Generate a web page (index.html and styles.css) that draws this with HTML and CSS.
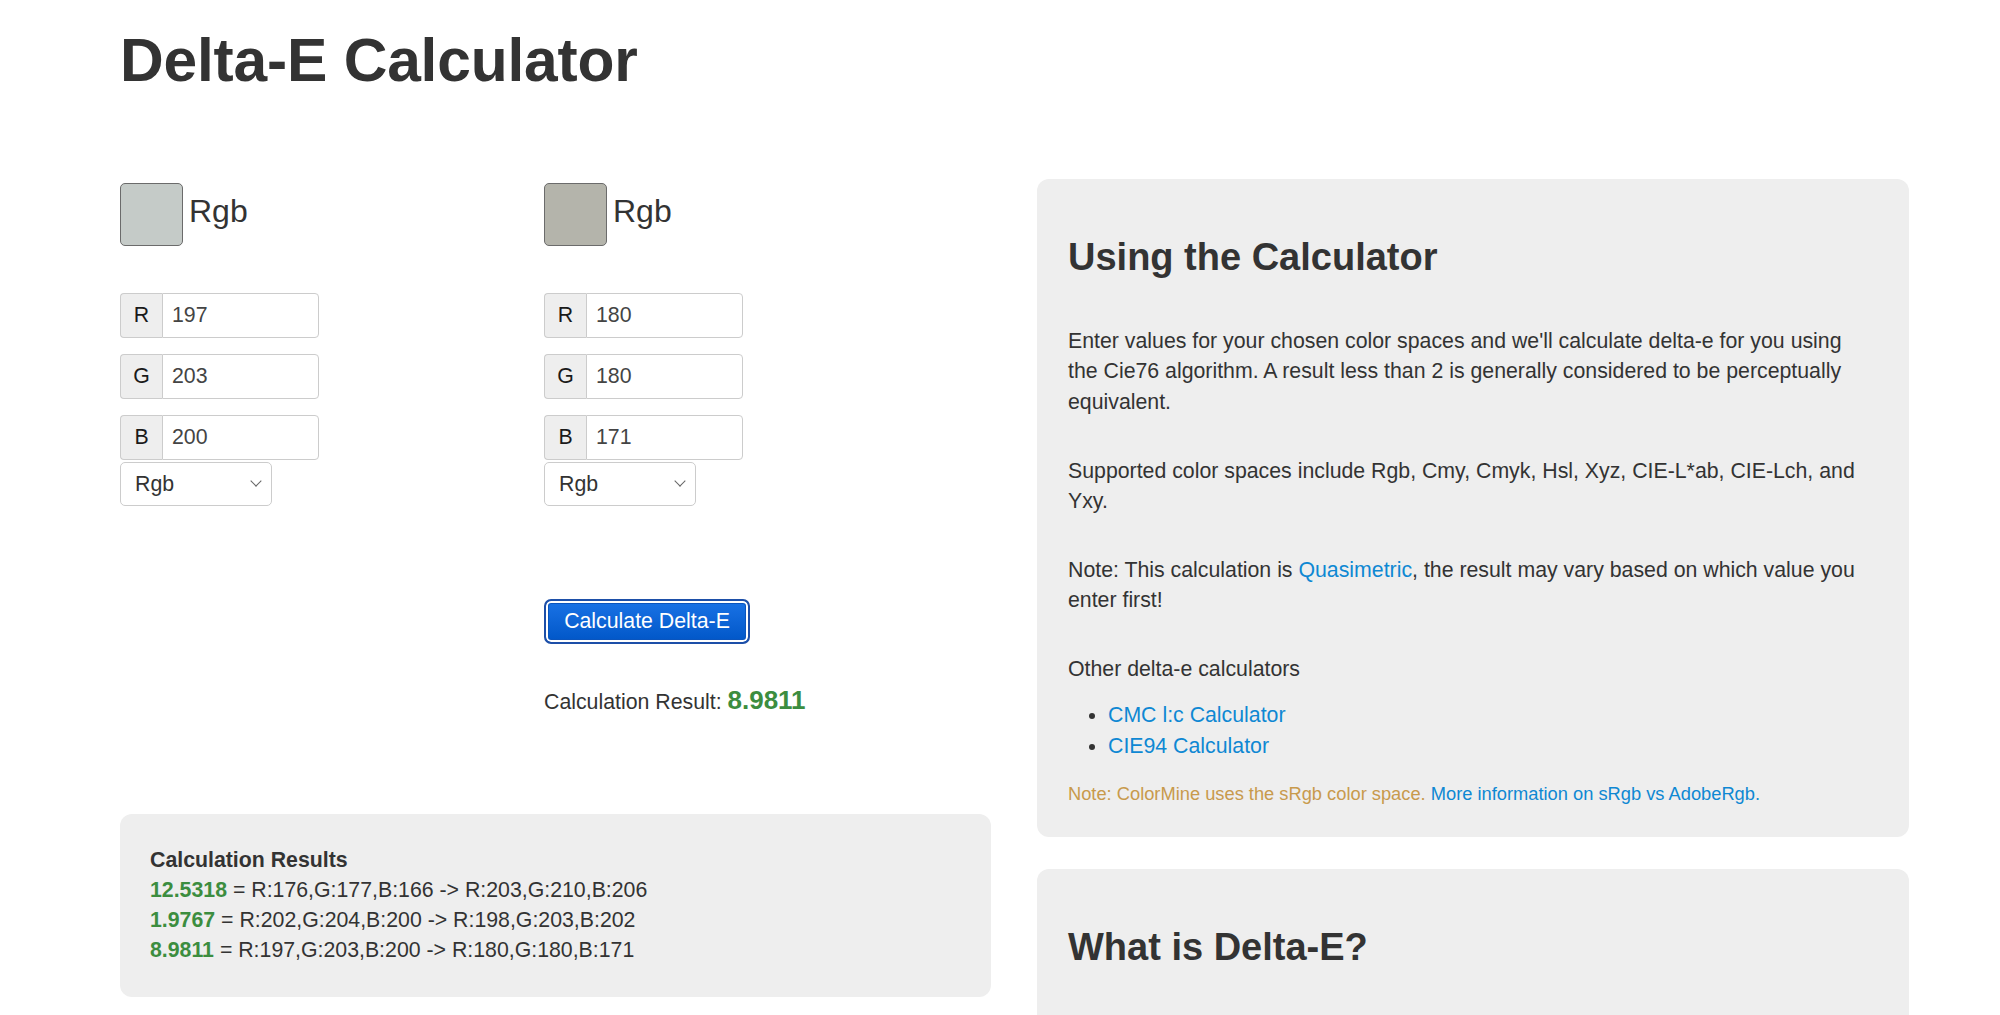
FILE: index.html
```html
<!DOCTYPE html>
<html lang="en">
<head>
<meta charset="utf-8">
<title>Delta-E Calculator</title>
<link rel="stylesheet" href="styles.css">
</head>
<body>
<div class="page">
  <h1 class="title">Delta-E Calculator</h1>
  <div class="main">
    <div class="left">
      <div class="pickers">
        <div class="picker">
          <div class="swatch-row">
            <div class="swatch swatch-a"></div>
            <span class="space-label">Rgb</span>
          </div>
          <div class="fields">
            <div class="input-group"><span class="addon">R</span><input class="field" type="text" value="197"></div>
            <div class="input-group"><span class="addon">G</span><input class="field" type="text" value="203"></div>
            <div class="input-group"><span class="addon">B</span><input class="field" type="text" value="200"></div>
            <div class="select-wrap"><select class="space-select"><option>Rgb</option></select></div>
          </div>
        </div>
        <div class="picker">
          <div class="swatch-row">
            <div class="swatch swatch-b"></div>
            <span class="space-label">Rgb</span>
          </div>
          <div class="fields">
            <div class="input-group"><span class="addon">R</span><input class="field" type="text" value="180"></div>
            <div class="input-group"><span class="addon">G</span><input class="field" type="text" value="180"></div>
            <div class="input-group"><span class="addon">B</span><input class="field" type="text" value="171"></div>
            <div class="select-wrap"><select class="space-select"><option>Rgb</option></select></div>
          </div>
          <div class="actions">
            <button class="calc-btn" type="button">Calculate Delta-E</button>
            <p class="result-line">Calculation Result: <span class="result-value">8.9811</span></p>
          </div>
        </div>
      </div>
      <div class="results">
        <div class="results-title">Calculation Results</div>
        <div class="results-row"><span class="de">12.5318</span> = R:176,G:177,B:166 -&gt; R:203,G:210,B:206</div>
        <div class="results-row"><span class="de">1.9767</span> = R:202,G:204,B:200 -&gt; R:198,G:203,B:202</div>
        <div class="results-row"><span class="de">8.9811</span> = R:197,G:203,B:200 -&gt; R:180,G:180,B:171</div>
      </div>
    </div>
    <div class="right">
      <div class="panel">
        <h2 class="panel-title">Using the Calculator</h2>
        <p class="para">Enter values for your chosen color spaces and we'll calculate delta-e for you using the Cie76 algorithm. A result less than 2 is generally considered to be perceptually equivalent.</p>
        <p class="para">Supported color spaces include Rgb, Cmy, Cmyk, Hsl, Xyz, CIE-L*ab, CIE-Lch, and Yxy.</p>
        <p class="para">Note: This calculation is <a class="link" href="#">Quasimetric</a>, the result may vary based on which value you enter first!</p>
        <p class="para para-tight">Other delta-e calculators</p>
        <ul class="calc-list">
          <li><a class="link" href="#">CMC l:c Calculator</a></li>
          <li><a class="link" href="#">CIE94 Calculator</a></li>
        </ul>
        <p class="note">Note: ColorMine uses the sRgb color space. <a class="link" href="#">More information on sRgb vs AdobeRgb.</a></p>
      </div>
      <div class="panel panel-second">
        <h2 class="panel-title">What is Delta-E?</h2>
      </div>
    </div>
  </div>
</div>
</body>
</html>
```

FILE: styles.css
```css
* { box-sizing: border-box; }

html, body {
  margin: 0;
  padding: 0;
  background: #fff;
}

body {
  font-family: "Liberation Sans", Arial, Helvetica, sans-serif;
  font-size: 21.3px;
  line-height: 30.4px;
  color: #333;
}

.page {
  padding-left: 120px;
  width: 1909px;
}

.title {
  font-size: 60.5px;
  line-height: 66px;
  font-weight: bold;
  margin: 26.5px 0 86.5px;
  color: #333;
  letter-spacing: -0.2px;
}

.main {
  display: grid;
  grid-template-columns: 871px 872px;
  column-gap: 46px;
  align-items: start;
}

/* ---------- left column ---------- */
.pickers {
  display: grid;
  grid-template-columns: 424px 424px;
  align-items: start;
}

.swatch-row {
  display: flex;
  align-items: flex-start;
  margin-top: 4px;
  height: 63px;
}

.swatch {
  width: 63px;
  height: 63px;
  border: 1px solid #6b6b6b;
  border-radius: 5px;
}

.swatch-a { background: rgb(197, 203, 200); }
.swatch-b { background: rgb(180, 180, 171); }

.space-label {
  font-size: 32px;
  line-height: 35px;
  margin: 11px 0 0 6px;
  color: #333;
}

.fields {
  margin-top: 47px;
}

.input-group {
  display: flex;
  width: 199px;
  height: 45px;
  margin-bottom: 16px;
}

.input-group:nth-child(3) {
  margin-bottom: 2px;
}

.addon {
  width: 42px;
  flex: none;
  display: flex;
  align-items: center;
  justify-content: center;
  background: #eee;
  border: 1px solid #ccc;
  border-right: none;
  border-radius: 4px 0 0 4px;
  color: #1a1a1a;
  font-size: 21.3px;
}

.field {
  flex: 1;
  min-width: 0;
  height: 45px;
  border: 1px solid #ccc;
  border-radius: 0 4px 4px 0;
  padding: 0 9px;
  font-family: inherit;
  font-size: 21.3px;
  color: #444;
  background: #fff;
  outline: none;
}

.select-wrap {
  position: relative;
  width: 152px;
  height: 44px;
}

.select-wrap::after {
  content: "";
  position: absolute;
  right: 12px;
  top: 15px;
  width: 7px;
  height: 7px;
  border-right: 1.3px solid #666;
  border-bottom: 1.3px solid #666;
  transform: rotate(45deg);
  pointer-events: none;
}

.space-select {
  appearance: none;
  -webkit-appearance: none;
  width: 152px;
  height: 44px;
  border: 1px solid #ccc;
  border-radius: 5px;
  background: #fff;
  padding: 0 30px 0 14px;
  font-family: inherit;
  font-size: 21.3px;
  color: #333;
}

.actions {
  margin-top: 93px;
}

.calc-btn {
  display: block;
  width: 206px;
  height: 45px;
  padding: 0;
  border: 2px solid #1d4fa8;
  border-radius: 7px;
  background: linear-gradient(#1a73e6, #0056c7);
  box-shadow: inset 0 0 0 2px #fff, inset 0 0 0 3px #0a55be;
  color: #fff;
  font-family: inherit;
  font-size: 21.3px;
  line-height: 1;
}

.result-line {
  margin: 41px 0 0;
  line-height: 30px;
}

.result-value {
  color: #3c8d3f;
  font-weight: bold;
  font-size: 26px;
}

.results {
  margin-top: 97px;
  background: #eee;
  border-radius: 12px;
  padding: 31px 30px 32px;
  line-height: 30px;
}

.results-title {
  font-weight: bold;
}

.de {
  color: #3c8d3f;
  font-weight: bold;
}

/* ---------- right column ---------- */
.panel {
  background: #eee;
  border-radius: 12px;
  padding: 30px 31px 30px;
}

.panel-second {
  margin-top: 32px;
  min-height: 260px;
}

.panel-title {
  font-size: 38px;
  line-height: 41.8px;
  font-weight: bold;
  margin: 27.5px 0 47.5px;
  color: #333;
}

.para {
  margin: 0 0 38.5px;
  max-width: 795px;
}

.para-tight {
  margin-bottom: 15.6px;
}

.calc-list {
  margin: 0 0 20.3px;
  padding-left: 40px;
}

.link {
  color: #0e88d3;
  text-decoration: none;
}

.note {
  margin: 0;
  font-size: 18.3px;
  line-height: 26px;
  color: #c89a4c;
}
```
